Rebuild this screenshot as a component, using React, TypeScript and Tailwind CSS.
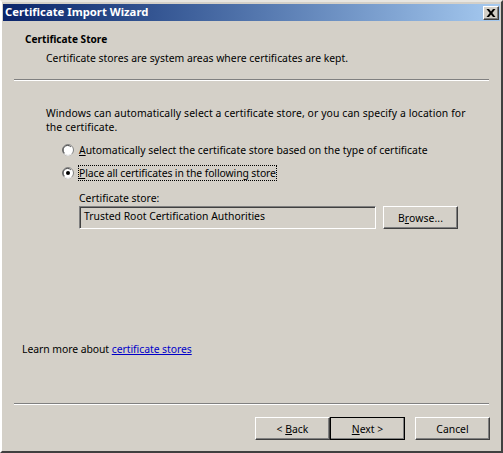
import React from 'react';

const font = "font-['Tahoma','Noto_Sans','Liberation_Sans',sans-serif]";

function Divider() {
  return (
    <div className="mx-[11px]">
      <div className="h-px bg-[#808080]" />
      <div className="h-px bg-white" />
    </div>
  );
}

function Raised({ className = '', children }: { className?: string; children: React.ReactNode }) {
  return (
    <div className={`bg-[#d4d0c8] border border-t-white border-l-white border-r-[#404040] border-b-[#404040] shadow-[inset_-1px_-1px_0_#808080] flex items-center justify-center ${className}`}>
      {children}
    </div>
  );
}

function Radio({ checked }: { checked?: boolean }) {
  return (
    <svg width="12" height="12" viewBox="0 0 12 12" className="shrink-0">
      <circle cx="6" cy="6" r="5.5" fill="#fff" stroke="#808080" />
      <path d="M2.2 9.800a5.400 5.400 0 0 0 7.600 0" fill="none" stroke="#fff" />
      <path d="M2.400 9.200a4.500 4.500 0 0 1 0-6.400 4.500 4.500 0 0 1 6.400 0" fill="none" stroke="#404040" />
      {checked && <circle cx="6" cy="6" r="2" fill="#000" />}
    </svg>
  );
}

export default function App() {
  return (
    <div className={`w-[503px] h-[453px] bg-[#d4d0c8] border-2 border-t-[#e8e6e1] border-l-white border-r-[#404040] border-b-[#404040] px-px pt-[2px] text-[10.4px] leading-[14px] text-black overflow-hidden flex flex-col ${font}`}>
      {/* Title bar */}
      <div className="h-[17px] shrink-0 flex items-center justify-between pl-[2px] pr-[1px] bg-gradient-to-r from-[#0a246a] to-[#a6caf0]">
        <span className="font-bold text-white text-[11.300px] pb-[2px]">Certificate Import Wizard</span>
        <Raised className="w-4 h-[14px]">
          <svg width="10" height="8" viewBox="0 0 10 8"><path d="M0.500 0h2.500l2 2.500L7 0h2.500L6.300 4l3.200 4H7L5 5.500 3 8H0.500l3.200-4z" fill="#000" /></svg>
        </Raised>
      </div>

      {/* Header */}
      <div className="pl-[22px] pt-[11px] font-bold text-[10.100px]">Certificate Store</div>
      <div className="pl-[43px] pt-[5px] pb-[14px]">Certificate stores are system areas where certificates are kept.</div>
      <Divider />

      {/* Body */}
      <div className="pl-[43px] pr-[28px] pt-[25px] tracking-[0.1px]">
        Windows can automatically select a certificate store, or you can specify a location for the certificate.
      </div>
      <div className="pl-[59px] pt-[9px] flex flex-col gap-[9px]">
        <div className="flex items-center gap-[5px] h-[14px]">
          <Radio />
          <span><span className="underline">A</span>utomatically select the certificate store based on the type of certificate</span>
        </div>
        <div className="flex items-center gap-[5px] h-[14px]">
          <Radio checked />
          <span className="outline-1 outline-dotted outline-black tracking-[-0.1px]"><span className="underline">P</span>lace all certificates in the following store</span>
        </div>
      </div>
      <div className="pl-[76px] pt-[11px]">Certificate store:</div>
      <div className="pl-[76px] pt-[1px] flex gap-[7px]">
        <div className="w-[297px] h-[23px] border border-t-[#808080] border-l-[#808080] border-r-white border-b-white shadow-[inset_1px_1px_0_#404040] flex items-start pt-[2px] pl-[4px]">
          Trusted Root Certification Authorities
        </div>
        <Raised className="w-[75px] h-[23px] tracking-[0.1px]"><span>B<span className="underline">r</span>owse...</span></Raised>
      </div>

      <div className="pl-[19px] pt-[113px] tracking-[-0.05px]">
        Learn more about <span className="text-[#0000c8] underline">certificate stores</span>
      </div>

      <div className="flex-1" />
      <Divider />
      <div className="h-[46px] shrink-0 flex justify-end items-start pt-[12px] pr-[10px]">
        <Raised className="w-[75px] h-[23px]"><span>&lt; <span className="underline">B</span>ack</span></Raised>
        <Raised className="w-[75px] h-[23px] outline outline-1 outline-black -outline-offset-1"><span><span className="underline">N</span>ext &gt;</span></Raised>
        <Raised className="w-[75px] h-[23px] ml-[10px]">Cancel</Raised>
      </div>
    </div>
  );
}
